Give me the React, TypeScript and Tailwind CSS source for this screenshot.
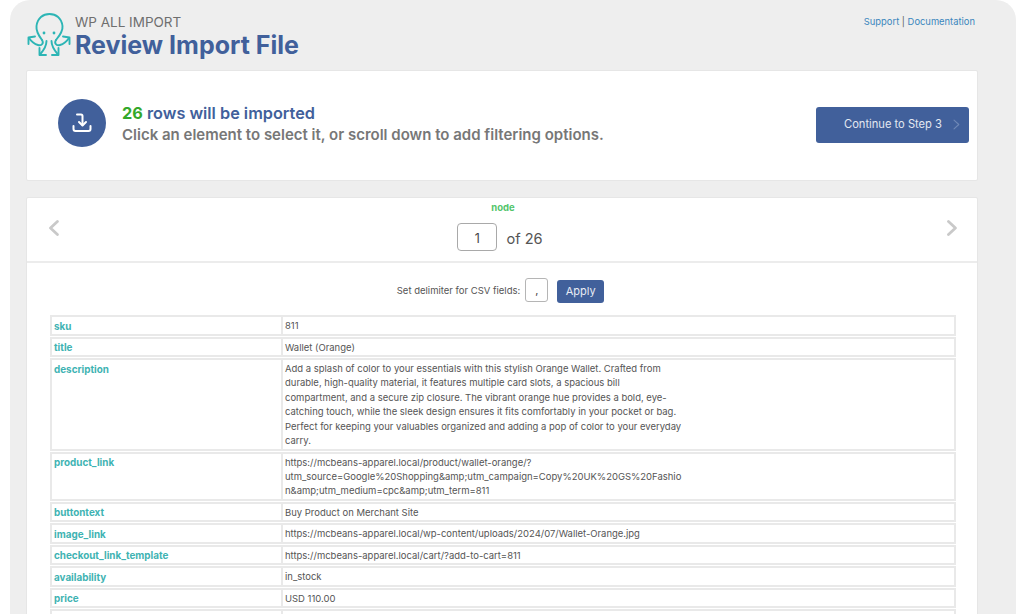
import React from "react";

const rows: { k: string; v: string[] }[] = [
  { k: "sku", v: ["811"] },
  { k: "title", v: ["Wallet (Orange)"] },
  {
    k: "description",
    v: [
      "Add a splash of color to your essentials with this stylish Orange Wallet. Crafted from",
      "durable, high-quality material, it features multiple card slots, a spacious bill",
      "compartment, and a secure zip closure. The vibrant orange hue provides a bold, eye-",
      "catching touch, while the sleek design ensures it fits comfortably in your pocket or bag.",
      "Perfect for keeping your valuables organized and adding a pop of color to your everyday",
      "carry.",
    ],
  },
  {
    k: "product_link",
    v: [
      "https://mcbeans-apparel.local/product/wallet-orange/?",
      "utm_source=Google%20Shopping&amp;utm_campaign=Copy%20UK%20GS%20Fashio",
      "n&amp;utm_medium=cpc&amp;utm_term=811",
    ],
  },
  { k: "buttontext", v: ["Buy Product on Merchant Site"] },
  { k: "image_link", v: ["https://mcbeans-apparel.local/wp-content/uploads/2024/07/Wallet-Orange.jpg"] },
  { k: "checkout_link_template", v: ["https://mcbeans-apparel.local/cart/?add-to-cart=811"] },
  { k: "availability", v: ["in_stock"] },
  { k: "price", v: ["USD 110.00"] },
  { k: "\u00a0", v: ["\u00a0"] },
];

function Logo() {
  return (
    <svg width="44" height="46" viewBox="26 12 44 46" fill="none" stroke="#2cb5b5" strokeWidth="1.9" strokeLinecap="round" strokeLinejoin="round">
      <path d="M41 40 C36.5 34 35 30 35.5 26 C36.5 18 42 14 48.5 14 C55 14 60.5 18 61.5 26 C62 30 60 34 55 40" />
      <path d="M41 40 C43 43 41 46 37 45 C33 44 30 41 28 38" />
      <path d="M55 40 C53 43 55 46 59 45 C63 44 66 41 68 38" />
      <path d="M27.5 44 L27.5 37.5 L34 36.5" />
      <path d="M68.5 44 L68.5 37.5 L62 36.5" />
      <path d="M45.5 41 C45.5 46 43 50 39 54.5" />
      <path d="M50.5 41 C50.5 46 53 50 57 54.5" />
      <path d="M38.5 48 L38.5 55 L45 55" />
      <path d="M57.5 48 L57.5 55 L51 55" />
      <circle cx="43" cy="33" r="1.4" fill="#2cb5b5" stroke="none" />
      <circle cx="53" cy="33" r="1.4" fill="#2cb5b5" stroke="none" />
    </svg>
  );
}

function ImportIcon() {
  return (
    <svg width="20" height="20" viewBox="0 0 20 20" fill="none" stroke="#ffffff" strokeWidth="2" strokeLinecap="round" strokeLinejoin="round">
      <path d="M5 1.5 H9 Q10.5 1.5 10.5 3 V12" />
      <path d="M7 9 L10.5 12.5 L14 9" />
      <path d="M1.5 13 V16 Q1.5 18 3.5 18 H16.5 Q18.5 18 18.5 16 V13" />
    </svg>
  );
}

function Chevron({ dir, color, size, sw }: { dir: "l" | "r"; color: string; size: number; sw: number }) {
  return (
    <svg width={size * 0.62} height={size} viewBox="0 0 10 16" fill="none" stroke={color} strokeWidth={sw} strokeLinecap="round" strokeLinejoin="round">
      <path d={dir === "l" ? "M8.5 1.5 L1.5 8 L8.5 14.5" : "M1.5 1.5 L8.5 8 L1.5 14.5"} />
    </svg>
  );
}

export default function App() {
  return (
    <div className="h-[614px] w-[1024px] overflow-hidden bg-white font-['Inter','Liberation_Sans',sans-serif] antialiased">
      <div className="ml-[10px] h-[614px] w-[1006px] rounded-t-[20px] bg-[#eeeeee] px-[16px]">
        {/* Header */}
        <div className="flex h-[70px] items-start justify-between">
          <div className="flex items-start pt-[12px]">
            <div className="ml-px mr-[4px]">
              <Logo />
            </div>
            <div className="flex flex-col pt-[1px]">
              <span className="text-[13.5px] leading-[18px] font-normal text-[#6f6f6f]">WP ALL IMPORT</span>
              <span className="mt-[1px] text-[25px] leading-[27px] font-bold text-[#41609b]">Review Import File</span>
            </div>
          </div>
          <div className="pt-[15px] pr-[25px] text-[9.4px] leading-[14px] text-[#5b5b5b]">
            <span className="text-[#3a86bd]">Support</span> | <span className="text-[#3a86bd]">Documentation</span>
          </div>
        </div>

        {/* Summary card */}
        <div className="flex h-[111px] w-[952px] items-center justify-between rounded-[2px] border border-[#e6e6e6] bg-white pr-[8px] pl-[31px]">
          <div className="mb-[6px] flex items-center gap-[16px]">
            <div className="flex h-[48px] w-[48px] items-center justify-center rounded-full bg-[#41609b]">
              <ImportIcon />
            </div>
            <div className="mt-[4px] flex flex-col">
              <span className="text-[16.3px] leading-[20.5px] font-semibold text-[#41609b]">
                <span className="font-bold text-[#34a82a]">26</span> rows will be imported
              </span>
              <span className="mt-[1.5px] text-[15px] leading-[20.5px] font-semibold text-[#777777]">
                Click an element to select it, or scroll down to add filtering options.
              </span>
            </div>
          </div>
          <button className="mb-[2px] flex h-[36px] w-[153px] items-center rounded-[3px] bg-[#41609b] pl-[28px] text-[11.15px] text-[#e3e8f1]">
            <span>Continue to Step 3</span>
            <span className="ml-[11px] flex items-center">
              <Chevron dir="r" color="#6f88b6" size={11} sw={1.6} />
            </span>
          </button>
        </div>

        {/* Main card */}
        <div className="mt-[16px] h-[500px] w-[952px] rounded-t-[2px] border border-[#e6e6e6] bg-white">
          <div className="flex h-[65px] items-center justify-between border-b-2 border-[#ececec] pr-[20px] pl-[22px]">
            <div className="mb-[4px]">
              <Chevron dir="l" color="#c9c9c9" size={16} sw={2.8} />
            </div>
            <div className="flex flex-col items-center pr-[6px]">
              <span className="mt-[-7px] ml-[6px] text-[9.5px] leading-[12px] font-bold text-[#53c56c]">node</span>
              <div className="mt-[9px] flex items-center gap-[9px]">
                <div className="flex h-[28px] w-[40px] items-center justify-center rounded-[4px] border border-[#a9a9a9] pt-[5px] text-[12.5px] text-[#444444]">1</div>
                <span className="pt-[6px] text-[14.6px] text-[#555555]">of 26</span>
              </div>
            </div>
            <div className="mb-[4px]">
              <Chevron dir="r" color="#c9c9c9" size={16} sw={2.8} />
            </div>
          </div>

          <div className="flex h-[52px] items-center justify-center pt-[4px] pr-[3px] text-[9.5px] text-[#555555]">
            <span>Set delimiter for CSV fields:</span>
            <div className="ml-[5px] mb-[2px] flex h-[24px] w-[23px] items-center justify-center rounded-[3px] border border-[#b5b5b5] text-[11px] text-[#444444]">,</div>
            <button className="ml-[9px] flex h-[23px] w-[47px] items-center justify-center rounded-[3px] bg-[#41609b] text-[11px] text-[#e8ecf4]">Apply</button>
          </div>

          <div className="mx-[23px] flex w-[906px] flex-col gap-px text-[9.47px]">
            {rows.map((r, idx) => (
              <div key={idx} className="flex">
                <div className="w-[233px] shrink-0 border-2 border-[#e9e9e9] px-[2px] pt-[1.5px] pb-[0.6px] text-[9.9px] leading-[14.4px] font-bold text-[#3fb3b3]">
                  {r.k}
                </div>
                <div className="flex-1 border-2 border-l-0 border-[#e9e9e9] px-[2px] pt-[2px] pb-[0.1px] leading-[14.4px] text-[#555555]">
                  {r.v.map((l, i) => (
                    <div key={i} className="whitespace-nowrap">{l}</div>
                  ))}
                </div>
              </div>
            ))}
          </div>
        </div>
      </div>
    </div>
  );
}
